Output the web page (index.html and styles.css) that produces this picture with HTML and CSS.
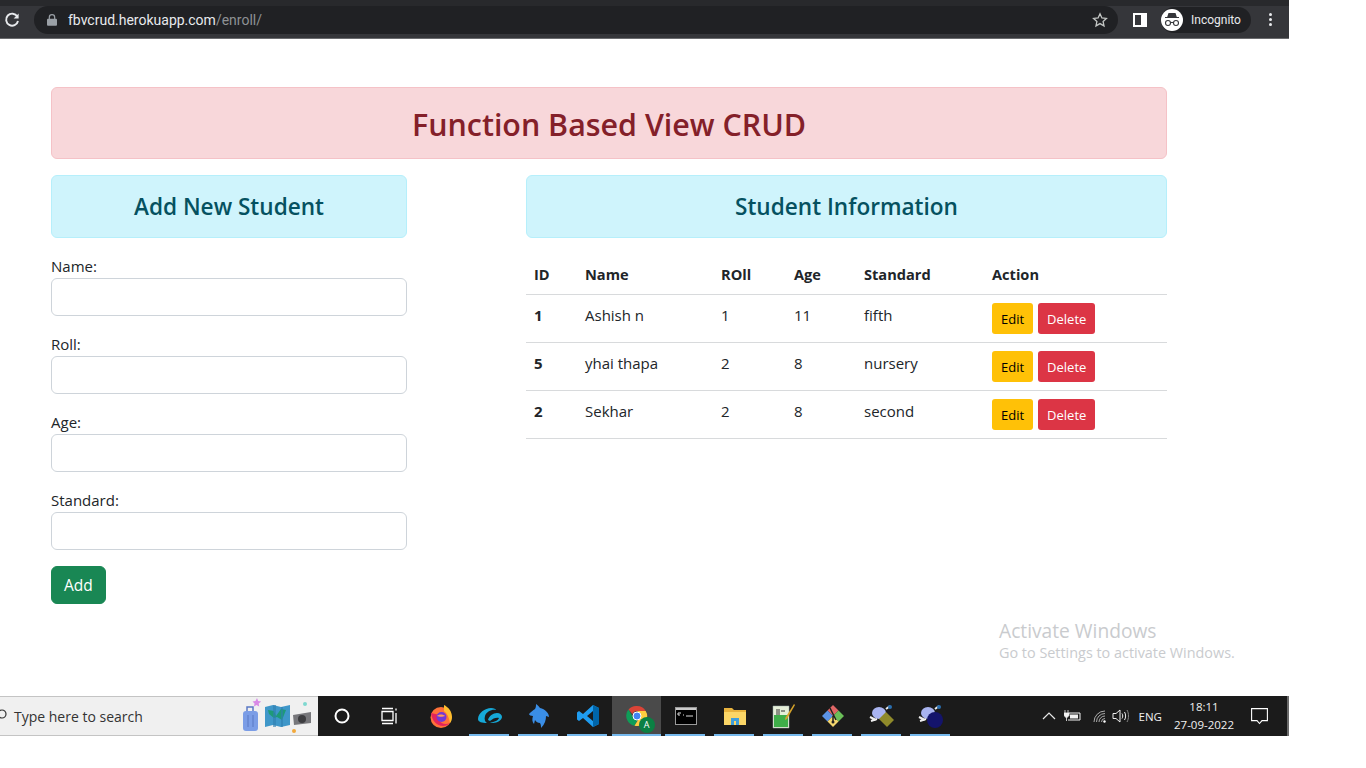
FILE: index.html
```html
<!DOCTYPE html>
<html lang="en">
<head>
    <meta charset="UTF-8">
    <title>Function Based View CRUD</title>
    <link rel="stylesheet" href="styles.css">
</head>
<body>
<div class="screen">
    <!-- Browser toolbar -->
    <header class="browser">
        <div class="tab-strip"></div>
        <div class="toolbar">
            <svg class="reload" width="16" height="16" viewBox="0 0 16 16"><path d="M13.3 4.6A6 6 0 1 0 14 9" fill="none" stroke="#e8eaed" stroke-width="1.9"/><path d="M14.6 1.6v5h-5z" fill="#e8eaed"/></svg>
            <div class="address">
                <svg width="10" height="12" viewBox="0 0 10 12"><path d="M2.3 5V3.4a2.7 2.7 0 0 1 5.4 0V5" fill="none" stroke="#9aa0a6" stroke-width="1.2"/><rect y="4.8" width="10" height="7" rx="1" fill="#9aa0a6"/></svg>
                <span class="url">fbvcrud.herokuapp.com<span class="url-path">/enroll/</span></span>
                <svg class="star" width="16" height="16" viewBox="0 0 16 16"><path d="M8 1.8l1.9 4.1 4.5.5-3.3 3 .9 4.5L8 11.6l-4 2.3.9-4.5-3.3-3 4.5-.5z" fill="none" stroke="#c4c7c5" stroke-width="1.3"/></svg>
            </div>
            <svg class="side-panel" width="14" height="14" viewBox="0 0 14 14"><path d="M0 0h14v14H0z" fill="#fff"/><path d="M2 2h6v10H2z" fill="#35363a"/></svg>
            <div class="incognito">
                <span class="incognito-icon">
                    <svg width="18" height="16" viewBox="0 0 18 16"><path d="M5.5 1h7l1.3 4H16v1H2V5h2.200z" fill="#35363a"/><circle cx="5" cy="11" r="2.500" fill="none" stroke="#35363a" stroke-width="1.1"/><circle cx="13" cy="11" r="2.500" fill="none" stroke="#35363a" stroke-width="1.1"/><path d="M7.500 10.500h3" stroke="#35363a" stroke-width="1.100"/></svg>
                </span>
                <span>Incognito</span>
            </div>
            <div class="menu-dots"><i></i><i></i><i></i></div>
        </div>
    </header>

    <!-- Page -->
    <main class="page">
        <div class="container">
            <h1 class="alert-title">Function Based View CRUD</h1>
            <div class="columns">
                <section>
                    <h2 class="alert-info">Add New Student</h2>
                    <form>
                        <div class="form-group">
                            <label for="name">Name:</label>
                            <input type="text" id="name">
                        </div>
                        <div class="form-group">
                            <label for="roll">Roll:</label>
                            <input type="text" id="roll">
                        </div>
                        <div class="form-group">
                            <label for="age">Age:</label>
                            <input type="text" id="age">
                        </div>
                        <div class="form-group">
                            <label for="standard">Standard:</label>
                            <input type="text" id="standard">
                        </div>
                        <button type="button" class="btn btn-add">Add</button>
                    </form>
                </section>
                <section>
                    <h2 class="alert-info">Student Information</h2>
                    <table>
                        <thead>
                            <tr><th class="c-id">ID</th><th class="c-name">Name</th><th class="c-roll">ROll</th><th class="c-age">Age</th><th class="c-std">Standard</th><th class="c-action">Action</th></tr>
                        </thead>
                        <tbody>
                            <tr>
                                <th>1</th><td>Ashish n</td><td>1</td><td>11</td><td>fifth</td>
                                <td><div class="actions"><button class="btn-sm btn-edit">Edit</button><button class="btn-sm btn-delete">Delete</button></div></td>
                            </tr>
                            <tr>
                                <th>5</th><td>yhai thapa</td><td>2</td><td>8</td><td>nursery</td>
                                <td><div class="actions"><button class="btn-sm btn-edit">Edit</button><button class="btn-sm btn-delete">Delete</button></div></td>
                            </tr>
                            <tr>
                                <th>2</th><td>Sekhar</td><td>2</td><td>8</td><td>second</td>
                                <td><div class="actions"><button class="btn-sm btn-edit">Edit</button><button class="btn-sm btn-delete">Delete</button></div></td>
                            </tr>
                        </tbody>
                    </table>
                </section>
            </div>
        </div>
        <div class="watermark">
            <div class="wm-title">Activate Windows</div>
            <div class="wm-sub">Go to Settings to activate Windows.</div>
        </div>
    </main>

    <!-- Windows taskbar -->
    <footer class="taskbar">
        <div class="search">
            <svg class="search-glass" width="8" height="14" viewBox="0 0 8 14"><circle cx="-1" cy="5" r="4" fill="none" stroke="#333" stroke-width="1.2"/></svg>
            <span>Type here to search</span>
            <svg class="search-art" width="76" height="38" viewBox="0 0 76 38">
                <path d="M17 1l1.200 3 3 .5-2.500 2 .5 3-2.700-1.500-2.500 1.500.5-3-2-2 3-.5z" fill="#d88ae6"/>
                <path d="M7 14v-4h6v4" fill="none" stroke="#5a78c4" stroke-width="1.500"/>
                <rect x="3" y="14" width="15" height="20" rx="3" fill="#7b9de6"/>
                <path d="M8 18v12M13 18v12" stroke="#5a78c4"/>
                <path d="M25 10l8-2 8 2 9-2v20l-9 2-8-2-8 2z" fill="#3f97c9"/>
                <path d="M28 13l6 1 2 5 5-7 5 1-4 10-5-3-3 1-5-4z" fill="#1e9a78"/>
                <path d="M33 8h3v22h-3zM41 10h2v20h-2z" fill="#2f7fb0" opacity=".6"/>
                <path d="M53 18l18-3v11l-17 2z" fill="#77777b"/>
                <circle cx="62" cy="22" r="4" fill="#3d3d40"/>
                <circle cx="65" cy="7" r="2" fill="#7fd8d0"/>
                <circle cx="54" cy="34" r="2" fill="#f2a93b"/>
            </svg>
        </div>
        <div class="task-item plain"><svg width="18" height="18" viewBox="0 0 18 18"><circle cx="9" cy="9" r="6.500" fill="none" stroke="#fff" stroke-width="2"/></svg></div>
        <div class="task-item plain"><svg width="18" height="18" viewBox="0 0 18 18"><path d="M1 4.500h11v9H1zM1 1.500h11M1 16.500h11M15 1.500v2M15 6v10.500" fill="none" stroke="#fff" stroke-width="1.300"/></svg></div>
        <div class="task-item plain firefox">
            <svg width="24" height="24" viewBox="0 0 24 24"><circle cx="12" cy="13.500" r="10.500" fill="#ff7139"/><path d="M15 1c4 2 8 6 8 12 0 3-1 5-2 6-1-6-3-10-6-12z" fill="#ffbd2e"/><path d="M2 9c1 8 6 13 12 13 3 0 5-1 7-3-4 2-9 1-11-3-1-2 0-4 1-5z" fill="#e3245b"/><circle cx="12.500" cy="13" r="5" fill="#7139d6"/><path d="M8 12c2-2 6-2 8 0-2 1-6 1-8 0z" fill="#ff9a5a"/></svg>
        </div>
        <div class="task-item">
            <svg width="26" height="20" viewBox="0 0 26 20"><path d="M1 13C1 7 8 2 14 2c3 0 5 1 5 2-4-1-10 2-11 6-1 3 0 6 2 7-5 0-9-1-9-4z" fill="#16a9d8"/><path d="M11 14c1-4 5-7 9-7 3 0 5 2 5 4 0 3-5 6-9 6h-3c3-1 8-2 9-5-2-1-6 0-9 3z" fill="#16a9d8"/></svg>
        </div>
        <div class="task-item">
            <svg width="22" height="26" viewBox="0 0 22 26"><path d="M8 1c2 1 3 3 4 4 5 1 9 5 9 9l-3-1c0 4-1 8-5 12 0-2 0-3-1-5-2 0-4-1-5-3l-1 4c-2-2-2-5-1-8-2 0-4-1-4-2 2-2 4-4 6-5 1-2 1-3 1-5z" fill="#3a8ee6"/></svg>
        </div>
        <div class="task-item">
            <svg width="24" height="24" viewBox="0 0 24 24"><path d="M17 1l6 3v16l-6 3L7 14l-4 3-2-1.500V8.500L3 7l4 3zM17 7l-6 5 6 5z" fill="#1f9cf0"/><path d="M17 1l6 3v16l-6 3z" fill="#0065a9"/></svg>
        </div>
        <div class="task-item active">
            <div class="chrome-icon">
                <svg width="24" height="24" viewBox="0 0 24 24"><path d="M12 2a10 10 0 0 1 8.700 5H12a5 5 0 0 0-4.500 3L3.500 5.500A10 10 0 0 1 12 2z" fill="#db4437"/><path d="M3.500 5.500l4 7a5 5 0 0 0 5 3.500l-3 5.700A10 10 0 0 1 3.500 5.500z" fill="#0f9d58"/><path d="M20.700 7a10 10 0 0 1-11.200 14.700l4.300-7A5 5 0 0 0 12 7z" fill="#ffcd40"/><circle cx="12" cy="12" r="4" fill="#4285f4" stroke="#fff"/></svg>
                <span class="chrome-badge">A</span>
            </div>
        </div>
        <div class="task-item">
            <svg width="22" height="18" viewBox="0 0 22 18"><rect x=".5" y=".5" width="21" height="17" fill="#000" stroke="#9a9a9a"/><rect x="1" y="1" width="20" height="2" fill="#ccc"/><path d="M3 6h3M3 8h2M3 6v2M8 8h1M11 9h7" stroke="#ddd"/></svg>
        </div>
        <div class="task-item">
            <svg width="22" height="20" viewBox="0 0 22 20"><path d="M0 2h8l2 2h12v15H0z" fill="#e8b33e"/><path d="M0 6h22v13H0z" fill="#fbd667"/><path d="M7 12h8v7H7z" fill="#3f9fdc"/><path d="M10 15h2v4h-2z" fill="#fbd667"/></svg>
        </div>
        <div class="task-item">
            <svg width="24" height="26" viewBox="0 0 24 26"><path d="M1 3h16v22H1z" fill="#e6efd8" stroke="#9aa" stroke-width=".5"/><path d="M2 12h14v12H2z" fill="#3fae49"/><path d="M5 6v6M7 6v6M9 8h4" stroke="#333"/><path d="M22 1l1 1-8 14-2 1 .5-2.500z" fill="#d6a32a"/></svg>
        </div>
        <div class="task-item">
            <svg width="24" height="24" viewBox="0 0 24 24"><path d="M12 1l5.500 5.500L12 12 6.500 6.500z" fill="#e06666"/><path d="M6.500 6.500L12 12l-5.500 5.500L1 12z" fill="#5b93e6"/><path d="M17.500 6.500L23 12l-5.500 5.500L12 12z" fill="#6bbf59"/><path d="M12 12l5.500 5.500L12 23l-5.500-5.500z" fill="#f5d76e"/><path d="M9 4l6 12M12 12v6" stroke="#222" stroke-width="1.500"/><circle cx="12" cy="18" r="1.500" fill="#222"/></svg>
        </div>
        <div class="task-item">
            <svg width="26" height="26" viewBox="0 0 26 26"><ellipse cx="10" cy="10" rx="7" ry="6" fill="#a9b4f0"/><path d="M1 14l6 3M2 18l6-2M17 6l4-3M15 14l3 2" stroke="#eee" stroke-width="2"/><circle cx="21" cy="4" r="2" fill="#2a6fb0"/><path d="M17 9l8 8-7 7-8-8z" fill="#8f8a2a"/></svg>
        </div>
        <div class="task-item">
            <svg width="26" height="26" viewBox="0 0 26 26"><ellipse cx="10" cy="10" rx="7" ry="6" fill="#a9b4f0"/><path d="M1 14l6 3M2 18l6-2M17 6l4-3M15 14l3 2" stroke="#eee" stroke-width="2"/><circle cx="21" cy="4" r="2" fill="#2a6fb0"/><circle cx="17" cy="17" r="8" fill="#14146b"/></svg>
        </div>
        <div class="tray">
            <svg width="14" height="8" viewBox="0 0 14 8"><path d="M1 7l6-6 6 6" fill="none" stroke="#e8e8e8" stroke-width="1.200"/></svg>
            <svg class="tray-battery" width="17" height="12" viewBox="0 0 17 12"><path d="M1 0v3M4 0v3M0 3h5v2.500L2.500 8 0 5.500zM2.500 8v3" fill="#f2f2f2" stroke="#f2f2f2" stroke-width=".8"/><path d="M5 3h11v7H4" fill="none" stroke="#f2f2f2"/><path d="M6 4.500h8v4H6z" fill="#f2f2f2"/></svg>
            <svg class="tray-wifi" width="14" height="13" viewBox="0 0 14 13"><path d="M1 12a11 11 0 0 1 11-11M3.500 12a8.500 8.500 0 0 1 8.500-8.500M6 12a6 6 0 0 1 6-6M8.500 12a3.500 3.500 0 0 1 3.500-3.500" fill="none" stroke="#bbb" stroke-width=".9"/><circle cx="11.500" cy="11.500" r="1.200" fill="#fff"/></svg>
            <svg class="tray-volume" width="17" height="14" viewBox="0 0 17 14"><path d="M1 4.500h3L8 1v12L4 9.500H1z" fill="none" stroke="#eee"/><path d="M10 4.500c1 1.500 1 3.500 0 5M12.500 3c1.500 2.500 1.500 5.500 0 8" fill="none" stroke="#eee"/><path d="M15 1c2 3.500 2 8.500 0 12" fill="none" stroke="#888"/></svg>
            <span class="tray-lang">ENG</span>
            <div class="clock"><div>18:11</div><div>27-09-2022</div></div>
            <svg class="notif" width="17" height="17" viewBox="0 0 17 17"><path d="M.6.600h15.800v12h-5.400L8.500 15.500 6 12.600H.6z" fill="none" stroke="#fff" stroke-width="1.100"/></svg>
        </div>
    </footer>
</div>
</body>
</html>
```

FILE: styles.css
```css
/* General */
html, body {
    margin: 0;
    background: #fff;
}

body {
    font-family: "Open Sans", "Noto Sans", sans-serif;
    color: #212529;
}

.screen {
    width: 1289px;
    height: 736px;
    display: flex;
    flex-direction: column;
}

/* Browser toolbar */
.browser {
    height: 39px;
    flex: none;
    background: #35363a;
    border-bottom: 1px solid #6a6b6e;
    box-sizing: border-box;
}

.tab-strip {
    height: 6px;
    background: #28292c;
}

.toolbar {
    height: 32px;
    display: flex;
    align-items: flex-start;
}

.reload {
    margin: 6px 14px 0 4px;
}

.address {
    width: 1084px;
    height: 28px;
    background: #202124;
    border-radius: 14px;
    display: flex;
    align-items: center;
    box-sizing: border-box;
    padding: 0 10px 0 13px;
    font-family: "Roboto", sans-serif;
    font-size: 14px;
    color: #e8eaed;
}

.url {
    margin-left: 11px;
    flex: 1;
}

.url-path {
    color: #8e9194;
}

.side-panel {
    margin: 7px 0 0 15px;
}

.incognito {
    width: 90px;
    height: 26px;
    margin: 1px 0 0 14px;
    border-radius: 13px;
    background: #202124;
    display: flex;
    align-items: center;
    gap: 8px;
    font-family: "Roboto", sans-serif;
    font-size: 12px;
    color: #e8eaed;
}

.incognito-icon {
    width: 22px;
    height: 22px;
    border-radius: 50%;
    background: #fff;
    display: flex;
    align-items: center;
    justify-content: center;
}

.menu-dots {
    margin: 7px 0 0 18px;
    display: flex;
    flex-direction: column;
    gap: 2px;
}

.menu-dots i {
    width: 3px;
    height: 3px;
    border-radius: 50%;
    background: #e8eaed;
}

/* Page */
.page {
    flex: 1;
    position: relative;
}

.container {
    width: 1116px;
    margin-left: 51px;
    padding-top: 48px;
}

.alert-title {
    height: 72px;
    margin: 0 0 16px;
    box-sizing: border-box;
    background: #f8d7da;
    border: 1px solid #f5c2c7;
    border-radius: 6px;
    color: #842029;
    font-size: 30.400px;
    font-weight: 600;
    line-height: 73px;
    text-align: center;
}

.columns {
    display: grid;
    grid-template-columns: 356px 641px;
    justify-content: space-between;
}

.alert-info {
    height: 63px;
    margin: 0 0 16px;
    box-sizing: border-box;
    background: #cff4fc;
    border: 1px solid #b6effb;
    border-radius: 6px;
    color: #055160;
    font-size: 22.600px;
    font-weight: 600;
    line-height: 62px;
    text-align: center;
}

/* Form */
.form-group {
    margin-bottom: 16px;
}

label {
    display: block;
    font-size: 15px;
    line-height: 24px;
}

input[type="text"] {
    display: block;
    width: 100%;
    height: 38px;
    box-sizing: border-box;
    background: #fff;
    border: 1px solid #ced4da;
    border-radius: 6px;
}

.btn {
    height: 38px;
    padding: 0 12px;
    border: 1px solid #198754;
    border-radius: 6px;
    font-family: inherit;
    font-size: 15.500px;
}

.btn-add {
    background: #198754;
    color: #fff;
}

/* Table */
table {
    width: 641px;
    table-layout: fixed;
    border-collapse: collapse;
    font-size: 15px;
}

thead th {
    height: 40px;
    padding: 1px 8px 0;
    box-sizing: border-box;
    font-weight: 700;
    font-size: 14.600px;
    text-align: left;
    border-bottom: 1px solid #d8dadc;
}

.c-id { width: 51px; }
.c-name { width: 136px; }
.c-roll { width: 73px; }
.c-age { width: 70px; }
.c-std { width: 128px; }
.c-action { width: 183px; }

tbody th,
tbody td {
    height: 48px;
    padding: 8px 8px 0;
    box-sizing: border-box;
    vertical-align: top;
    text-align: left;
    line-height: 24px;
    border-bottom: 1px solid #d8dadc;
}

.actions {
    display: flex;
    gap: 5px;
}

.btn-sm {
    height: 31px;
    padding: 1px 8px 0;
    border: 1px solid transparent;
    border-radius: 3px;
    font-family: inherit;
    font-size: 13px;
}

.btn-edit {
    background: #ffc107;
    color: #000;
}

.btn-delete {
    background: #dc3545;
    color: #fff;
}

/* Marca de agua de Windows */
.watermark {
    position: absolute;
    left: 999px;
    top: 579px;
    color: #c9cbce;
    white-space: nowrap;
}

.wm-title {
    font-size: 19.200px;
    line-height: 25px;
}

.wm-sub {
    font-size: 14.400px;
    line-height: 20px;
}

/* Taskbar */
.taskbar {
    height: 40px;
    flex: none;
    background: #1b1b1b;
    display: flex;
    align-items: stretch;
}

.search {
    width: 318px;
    box-sizing: border-box;
    background: #f0f0f0;
    border-top: 1px solid #c4c4c4;
    border-bottom: 1px solid #c4c4c4;
    display: flex;
    align-items: center;
    font-size: 14px;
    color: #333;
}

.search-glass {
    width: 14px;
    flex: none;
}

.search span {
    flex: 1;
}

.search-art {
    flex: none;
    margin-right: 2px;
}

.task-item {
    width: 49px;
    flex: none;
    box-sizing: border-box;
    display: flex;
    align-items: center;
    justify-content: center;
    position: relative;
}

.task-item.plain {
    width: 48px;
}

.task-item.firefox {
    margin-left: 3px;
}

.task-item:not(.plain)::after {
    content: "";
    position: absolute;
    left: 4px;
    right: 5px;
    bottom: 0;
    height: 2px;
    background: #76b9ed;
}

.task-item.active {
    background: #4a4a4a;
}

.task-item.active::after {
    left: 0;
    right: 0;
}

.chrome-icon {
    position: relative;
    width: 24px;
    height: 24px;
}

.chrome-badge {
    position: absolute;
    right: -6px;
    bottom: -5px;
    width: 16px;
    height: 16px;
    border-radius: 50%;
    background: #0b8043;
    color: #fff;
    font-size: 9px;
    line-height: 16px;
    text-align: center;
}

.tray {
    flex: 1;
    display: flex;
    align-items: center;
    justify-content: flex-end;
    color: #f0f0f0;
    font-size: 11.500px;
    border-right: 2px solid #6b6b6b;
}

.tray-battery { margin-left: 8px; }
.tray-wifi { margin-left: 12px; }
.tray-volume { margin-left: 5px; }
.tray-lang { margin-left: 10px; }

.clock {
    margin-left: 12px;
    text-align: center;
    line-height: 18px;
}

.notif {
    margin: 0 19px 0 17px;
}
```
